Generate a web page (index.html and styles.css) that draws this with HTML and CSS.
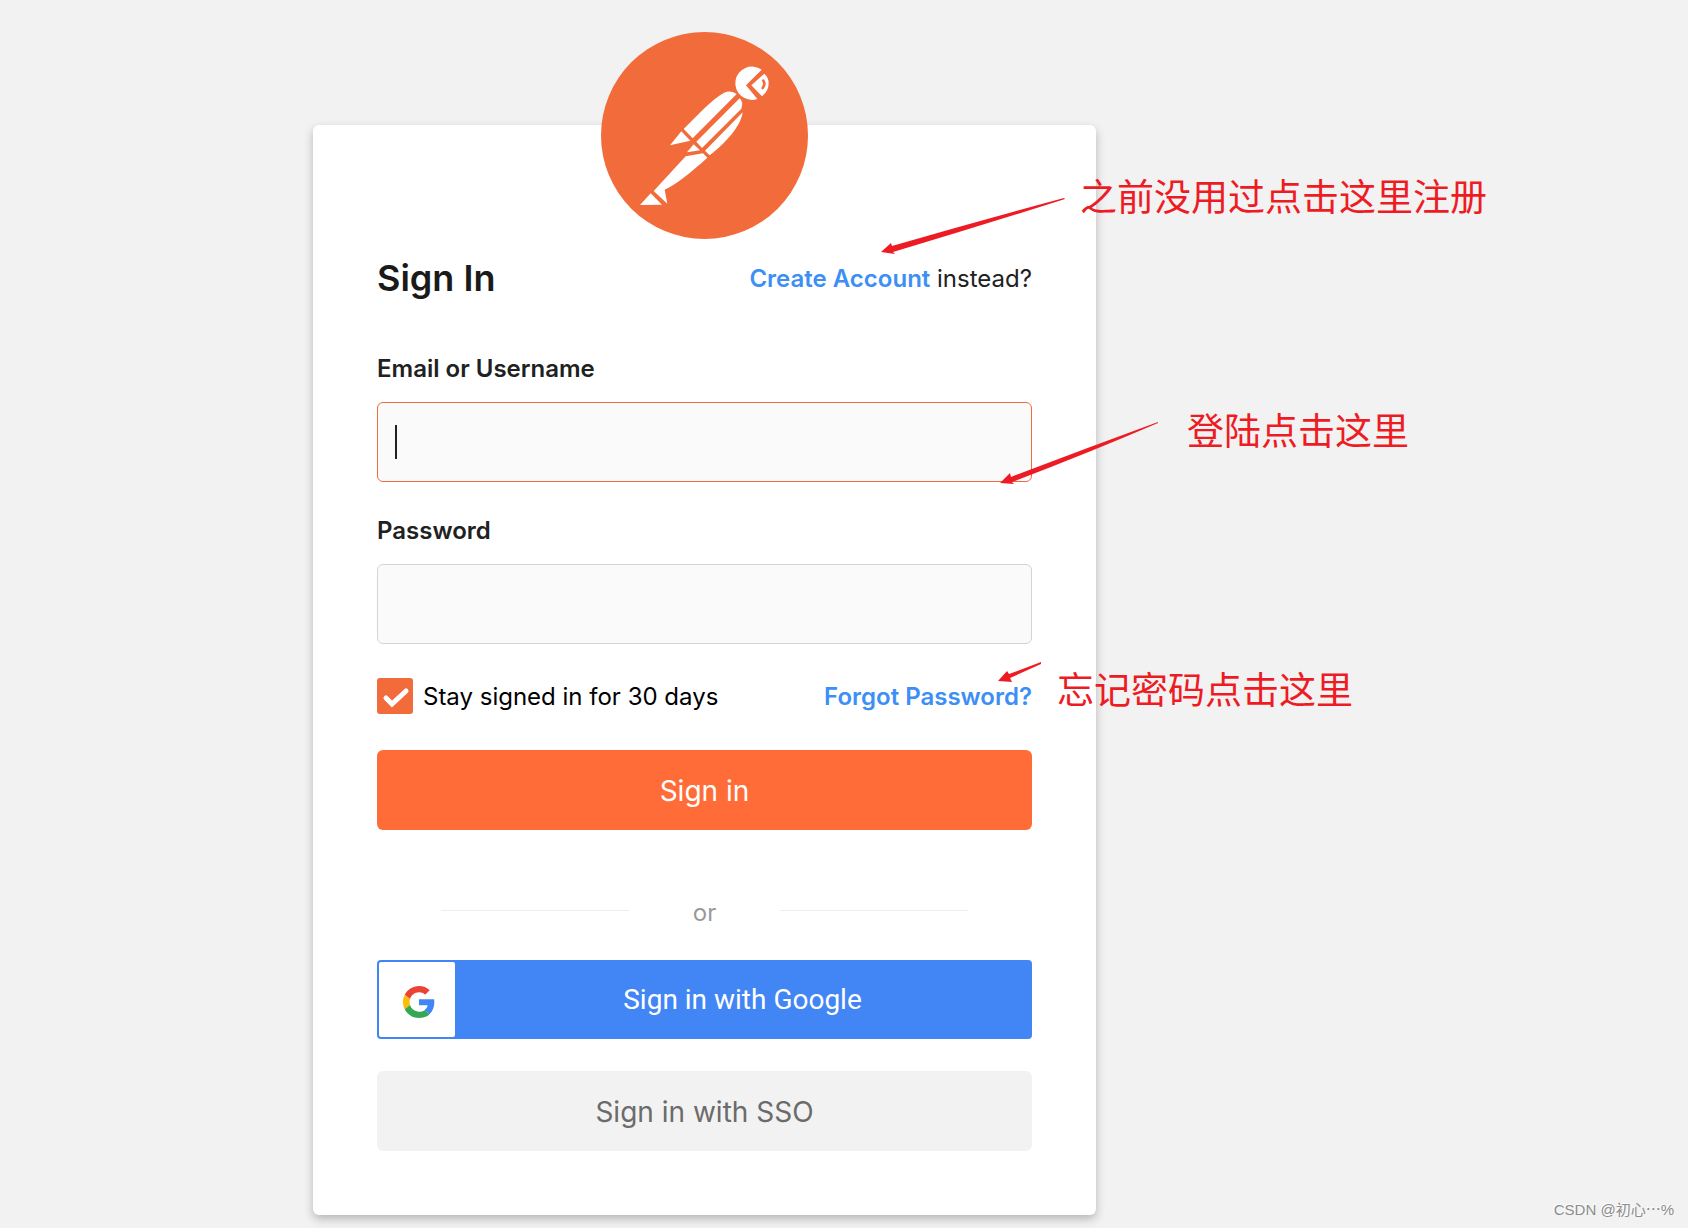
FILE: index.html
```html
<!DOCTYPE html>
<html lang="en">
<head>
<meta charset="utf-8">
<meta name="viewport" content="width=device-width, initial-scale=1">
<title>Sign In</title>
<link rel="stylesheet" href="styles.css">
</head>
<body>
<main class="page">
  <div class="stage">
    <section class="card">
      <svg class="logo" viewBox="33 35 621 621" role="img" aria-label="Postman">
        <circle class="logo-disc" cx="343.5" cy="345.5" r="310.5"/>
        <g class="logo-figure">
          <path d="M515 148A50 50 0 1 0 502 236L468 195Z"/>
          <path d="M523 160Q536 172 536 189Q536 212 516 228L484 195Z"/>
          <path d="M281 326C325 282 365 238 402 217Q424 208 440 221L308 354Z"/>
          <path d="M449 234Q461 245 454 265L336 383L319 364Z"/>
          <path d="M458 276C452 322 400 373 359 405L345 391Z"/>
          <path d="M274 333L301 361L240 375Z"/>
          <path d="M311 372L330 390L291 396Z"/>
          <path d="M287 408L339 399L352 412C305 454 262 490 224 508L232 550L191 512Z"/>
          <path d="M182 519L216 553L150 554Z"/>
        </g>
        <path class="logo-smile" d="M520 181Q527 191 518 203"/>
      </svg>

      <header class="card-header">
        <h1 class="title">Sign In</h1>
        <p class="switch"><a class="link" href="#create">Create Account</a> instead?</p>
      </header>

      <form class="form">
        <div class="field">
          <label class="label" for="username">Email or Username</label>
          <input class="input input-active" id="username" type="text">
        </div>
        <div class="field">
          <label class="label" for="password">Password</label>
          <input class="input" id="password" type="password">
        </div>
        <div class="options">
          <label class="stay"><input class="check" type="checkbox" checked>Stay signed in for 30 days</label>
          <a class="link" href="#forgot">Forgot Password?</a>
        </div>
        <button class="button button-primary" type="submit">Sign in</button>
      </form>

      <div class="divider">or</div>

      <div class="alternatives">
        <button class="button button-google" type="button">
          <span class="google-mark">
            <svg class="google-icon" viewBox="0 0 48 48" aria-hidden="true">
              <path fill="#EA4335" d="M24 9.5c3.54 0 6.71 1.22 9.21 3.6l6.85-6.85C35.9 2.38 30.47 0 24 0 14.62 0 6.51 5.38 2.56 13.22l7.98 6.19C12.43 13.72 17.74 9.5 24 9.5z"/>
              <path fill="#4285F4" d="M46.98 24.55c0-1.57-.15-3.09-.38-4.55H24v9.02h12.94c-.58 2.96-2.26 5.48-4.78 7.18l7.73 6c4.51-4.18 7.09-10.36 7.09-17.65z"/>
              <path fill="#FBBC05" d="M10.53 28.59c-.48-1.45-.76-2.99-.76-4.59s.27-3.14.76-4.59l-7.98-6.19C.92 16.46 0 20.12 0 24c0 3.88.92 7.54 2.56 10.78l7.97-6.19z"/>
              <path fill="#34A853" d="M24 48c6.48 0 11.93-2.13 15.89-5.81l-7.73-6c-2.15 1.45-4.92 2.3-8.16 2.3-6.26 0-11.57-4.22-13.47-9.91l-7.98 6.19C6.51 42.62 14.62 48 24 48z"/>
            </svg>
          </span>
          <span class="google-text">Sign in with Google</span>
        </button>
        <button class="button button-sso" type="button">Sign in with SSO</button>
      </div>
    </section>

    <svg class="arrows" width="860" height="600" viewBox="0 0 860 600" aria-hidden="true">
      <path d="M568 127L578 118L579 121Q665 96 751 73L752 74Q667 101 580 127L582 129Z"/>
      <path d="M687 358L697 348L698 352Q771 324 845 297L845 298Q773 329 699 357L701 359Z"/>
      <path d="M685 556L694 546L696 549L728 537L728 539L697 553L699 557Z"/>
    </svg>
    <p class="note note-register" lang="zh">之前没用过点击这里注册</p>
    <p class="note note-login" lang="zh">登陆点击这里</p>
    <p class="note note-forgot" lang="zh">忘记密码点击这里</p>
  </div>
</main>
<p class="watermark" lang="zh">CSDN @初心⋯%</p>
</body>
</html>
```
FILE: styles.css
```css
*, *::before, *::after {
  box-sizing: border-box;
}

body {
  margin: 0;
  background: #f2f2f2;
  color: #212121;
  font-family: Inter, "Noto Sans CJK SC", sans-serif;
  font-size: 24px;
  line-height: 29px;
}

h1, p {
  margin: 0;
}

.page {
  display: grid;
  grid-template-columns: 313fr 783fr 592fr;
  padding: 125px 0 13px;
  overflow: hidden;
}

.stage {
  position: relative;
  grid-column: 2;
}

.card {
  display: flow-root;
  padding: 0 64px 64px;
  background: #fff;
  border-radius: 6px;
  box-shadow: 0 4px 10px rgba(0, 0, 0, 0.25);
}

.logo {
  display: block;
  width: 207px;
  height: 207px;
  margin: -93px auto 17px;
}

.logo-disc {
  fill: #f26b3a;
}

.logo-figure {
  fill: #fff;
}

.logo-smile {
  fill: none;
  stroke: #f26b3a;
  stroke-width: 8;
  stroke-linecap: round;
}

.card-header {
  display: flex;
  align-items: center;
  justify-content: space-between;
  margin-bottom: 54px;
}

.title {
  font-size: 36px;
  font-weight: 600;
  line-height: 44px;
  color: #1a1a1a;
}

.link {
  color: #3d8ff5;
  font-weight: 600;
  text-decoration: none;
}

.form {
  display: flex;
  flex-direction: column;
  gap: 34px;
}

.field {
  display: flex;
  flex-direction: column;
  gap: 19px;
}

.label {
  font-weight: 600;
}

.input {
  width: 100%;
  height: 80px;
  padding: 0 16px;
  border: 1px solid #d4d4d4;
  border-radius: 6px;
  background: #fafafa;
  font: inherit;
  outline: none;
}

.input-active {
  border-color: #f26b3a;
  background: linear-gradient(#212121, #212121) 17px center / 2px 34px no-repeat #fafafa;
}

.options {
  display: flex;
  align-items: center;
  justify-content: space-between;
}

.stay {
  display: flex;
  align-items: center;
  gap: 10px;
  color: #000;
}

.check {
  appearance: none;
  width: 36px;
  height: 36px;
  margin: 0;
  border-radius: 3px;
  background: #f26b3a url("data:image/svg+xml,%3Csvg xmlns='http://www.w3.org/2000/svg' viewBox='0 0 36 36'%3E%3Cpath d='M9 20l6 6L29 13' fill='none' stroke='white' stroke-width='5' stroke-linecap='round'/%3E%3C/svg%3E") center / 36px no-repeat;
}

.button {
  width: 100%;
  height: 80px;
  padding: 2px 0 0;
  border: 0;
  border-radius: 6px;
  font: 400 28px/34px Inter, sans-serif;
  cursor: pointer;
}

.button-primary {
  margin-top: 2px;
  background: #ff6c37;
  color: #fff;
}

.divider {
  display: flex;
  align-items: center;
  gap: 64px;
  margin: 68px 64px 33px;
  color: #999;
}

.divider::before,
.divider::after {
  content: "";
  flex: 1;
  height: 1px;
  margin-bottom: 4px;
  background: #ededed;
}

.alternatives {
  display: flex;
  flex-direction: column;
  gap: 32px;
}

.button-google {
  display: flex;
  align-items: stretch;
  height: 79px;
  padding: 0;
  border: 2px solid #4285f4;
  border-radius: 4px;
  background: #4285f4;
  color: #fff;
  font-family: Roboto, sans-serif;
}

.google-mark {
  flex: none;
  width: 76px;
  padding: 24px 20px 19px 24px;
  border-radius: 2px;
  background: #fff;
}

.google-icon {
  display: block;
  width: 32px;
  height: 32px;
}

.google-text {
  flex: 1;
  align-self: center;
}

.button-sso {
  background: #f2f2f2;
  color: #6b6b6b;
}

/* Annotations laid over the card */
.arrows {
  position: absolute;
  top: 0;
  left: 0;
  fill: #ed1c24;
  pointer-events: none;
}

.note {
  position: absolute;
  color: #ed1c24;
  font-family: "Noto Sans CJK SC", sans-serif;
  font-size: 37px;
  line-height: 44px;
  white-space: nowrap;
}

.note-register {
  top: 48px;
  left: 767px;
}

.note-login {
  top: 282px;
  left: 874px;
}

.note-forgot {
  top: 541px;
  left: 744px;
}

.watermark {
  position: absolute;
  right: 14px;
  bottom: 8px;
  color: #8c8c8c;
  font-family: "Liberation Sans", "Noto Sans CJK SC", sans-serif;
  font-size: 15px;
  line-height: 20px;
  text-shadow: -1px -1px 0 #fff;
}
```
